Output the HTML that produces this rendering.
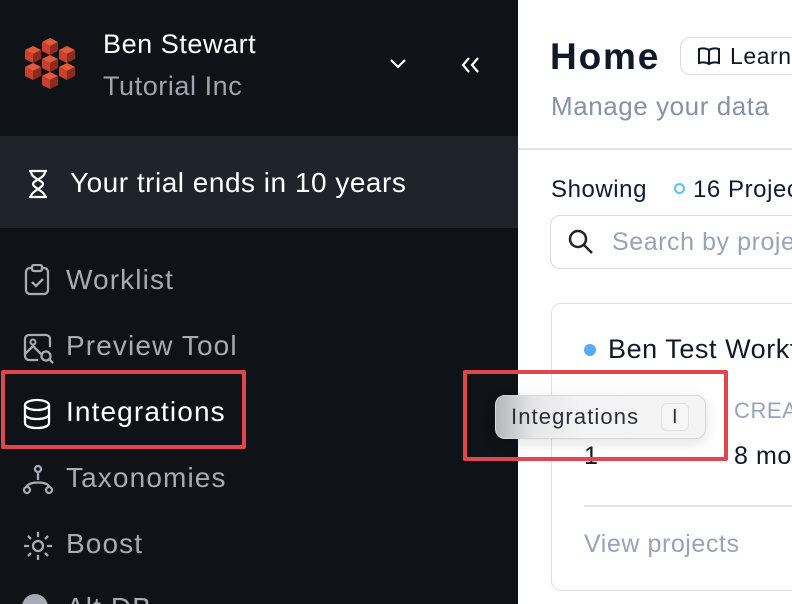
<!DOCTYPE html>
<html><head><style>
*{margin:0;padding:0;box-sizing:border-box}
html,body{width:792px;height:604px;overflow:hidden}
body{position:relative;background:#fff;font-family:"Liberation Sans",sans-serif;letter-spacing:0.035em}
.side{position:absolute;left:0;top:0;width:518px;height:604px;background:#0f1217;overflow:hidden}
.abs{position:absolute;white-space:nowrap}
.nav{position:absolute;left:66px;font-size:28px;color:#a7abb5;letter-spacing:0.04em}
.ic{position:absolute;left:22px}
</style></head><body>
<div class="side">
<svg class="abs" style="left:22px;top:36px" width="56" height="58" viewBox="0 0 56 58">
<defs><g id="c"><polygon points="0,-6 8,-2 0,2 -8,-2" fill="#e25a3a"/><polygon points="-8,-2 0,2 0,11 -8,7" fill="#c9402c"/><polygon points="8,-2 0,2 0,11 8,7" fill="#8e2a1e"/></g></defs>
<use href="#c" x="28" y="8"/><use href="#c" x="11" y="16"/><use href="#c" x="45" y="16"/><use href="#c" x="28" y="25"/><use href="#c" x="11" y="33"/><use href="#c" x="45" y="33"/><use href="#c" x="28" y="42"/>
</svg>
<div class="abs" style="left:103px;top:29px;font-size:27px;color:#fff">Ben Stewart</div>
<div class="abs" style="left:103px;top:71px;font-size:27px;color:#a0a4ae">Tutorial Inc</div>
<svg class="abs" style="left:388px;top:56px" width="20" height="16"><path d="M3 4l7 7 7-7" stroke="#fff" stroke-width="2.2" fill="none"/></svg>
<svg class="abs" style="left:460px;top:56px" width="22" height="18"><path d="M9 2l-6 7 6 7M18 2l-6 7 6 7" stroke="#fff" stroke-width="2.2" fill="none"/></svg>
<div class="abs" style="left:0;top:136px;width:518px;height:92px;background:#1f232b"></div>
<svg class="abs" style="left:26px;top:169px" width="24" height="30" viewBox="0 0 24 30"><path d="M3 2h18M3 28h18M5 2c0 8 12 9 12 13S5 22 5 28M19 2c0 8-12 9-12 13s12 7 12 13" stroke="#fff" stroke-width="2.2" fill="none"/></svg>
<div class="abs" style="left:70px;top:167px;font-size:28px;color:#fff;letter-spacing:0.018em">Your trial ends in 10 years</div>

<svg class="ic" style="top:264px" width="30" height="32" viewBox="0 0 30 32"><rect x="4" y="4" width="22" height="26" rx="4" stroke="#a7abb5" stroke-width="2.3" fill="none"/><rect x="10" y="1" width="10" height="6" rx="2" stroke="#a7abb5" stroke-width="2.3" fill="#0f1217"/><path d="M10 18l4 4 7-7" stroke="#a7abb5" stroke-width="2.3" fill="none"/></svg>
<div class="nav" style="top:264px">Worklist</div>
<svg class="ic" style="top:332px" width="32" height="32" viewBox="0 0 32 32"><path d="M16 28H7a4 4 0 0 1-4-4V7a4 4 0 0 1 4-4h17a4 4 0 0 1 4 4v8M3 22l8-8 8 8" stroke="#a7abb5" stroke-width="2.3" fill="none"/><circle cx="11" cy="10" r="2.5" stroke="#a7abb5" stroke-width="2" fill="none"/><circle cx="24" cy="24" r="4.5" stroke="#a7abb5" stroke-width="2.3" fill="none"/><path d="M27 27l4 4" stroke="#a7abb5" stroke-width="2.3"/></svg>
<div class="nav" style="top:330px">Preview Tool</div>
<svg class="ic" style="top:398px" width="30" height="32" viewBox="0 0 30 32"><ellipse cx="15" cy="7" rx="12" ry="5" stroke="#fff" stroke-width="2.3" fill="none"/><path d="M3 7v18c0 3 5 5 12 5s12-2 12-5V7M3 16c0 3 5 5 12 5s12-2 12-5" stroke="#fff" stroke-width="2.3" fill="none"/></svg>
<div class="nav" style="top:396px;color:#fff">Integrations</div>
<svg class="ic" style="top:464px" width="32" height="32" viewBox="0 0 32 32"><circle cx="16" cy="5" r="3" stroke="#a7abb5" stroke-width="2.3" fill="none"/><circle cx="5" cy="26" r="3" stroke="#a7abb5" stroke-width="2.3" fill="none"/><circle cx="27" cy="26" r="3" stroke="#a7abb5" stroke-width="2.3" fill="none"/><path d="M16 8v8M5 23c0-6 22-6 22 0" stroke="#a7abb5" stroke-width="2.3" fill="none"/></svg>
<div class="nav" style="top:462px">Taxonomies</div>
<svg class="ic" style="top:530px" width="32" height="32" viewBox="0 0 32 32"><circle cx="16" cy="16" r="5" stroke="#a7abb5" stroke-width="2.3" fill="none"/><path d="M16 2v5M16 25v5M2 16h5M25 16h5M6 6l3 3M23 23l3 3M6 26l3-3M23 9l3-3" stroke="#a7abb5" stroke-width="2.3"/></svg>
<div class="nav" style="top:528px">Boost</div>
<div class="abs" style="left:22px;top:594px;width:26px;height:26px;border-radius:50%;background:#a7abb5"></div>
<div class="nav" style="top:592px">Alt DB</div>
</div>

<div class="abs" style="left:550px;top:36px;font-size:37px;font-weight:bold;color:#111827;letter-spacing:0.05em">Home</div>
<div class="abs" style="left:680px;top:37px;width:130px;height:38px;border:1.5px solid #d9dce1;border-radius:10px"></div>
<svg class="abs" style="left:697px;top:46px" width="24" height="20" viewBox="0 0 24 20"><path d="M12 4c-3-2-6-2-10-1v14c4-1 7-1 10 1 3-2 6-2 10-1V3c-4-1-7-1-10 1zM12 4v14" stroke="#111827" stroke-width="2" fill="none"/></svg>
<div class="abs" style="left:730px;top:43px;font-size:23px;color:#111827">Learn</div>
<div class="abs" style="left:551px;top:91px;font-size:26px;color:#8792a6">Manage your data</div>
<div class="abs" style="left:518px;top:148px;width:274px;height:2px;background:#e2e4e8"></div>
<div class="abs" style="left:551px;top:176px;font-size:24px;color:#0f1b33">Showing</div>
<div class="abs" style="left:674px;top:183px;width:11px;height:11px;border:2px solid #5ac4e6;border-radius:50%"></div>
<div class="abs" style="left:693px;top:176px;font-size:24px;color:#0f1b33">16 Projects</div>
<div class="abs" style="left:550px;top:215px;width:260px;height:54px;border:1.5px solid #d9dce1;border-radius:10px"></div>
<svg class="abs" style="left:567px;top:228px" width="28" height="28" viewBox="0 0 28 28"><circle cx="11" cy="11" r="8" stroke="#222" stroke-width="2.5" fill="none"/><path d="M17 17l8 8" stroke="#222" stroke-width="2.5"/></svg>
<div class="abs" style="left:612px;top:228px;font-size:25px;color:#9aa3b5">Search by project</div>

<div class="abs" style="left:551px;top:303px;width:260px;height:288px;border:1.5px solid #dde0e5;border-radius:10px"></div>
<div class="abs" style="left:584px;top:344px;width:12px;height:12px;border-radius:50%;background:#5ea8f5"></div>
<div class="abs" style="left:608px;top:334px;font-size:27px;color:#111827">Ben Test Workflow</div>
<div class="abs" style="left:734px;top:398px;font-size:22px;color:#9aa3b5">CREATED</div>
<div class="abs" style="left:584px;top:442px;font-size:25px;color:#111827">1</div>
<div class="abs" style="left:734px;top:442px;font-size:25px;color:#111827">8 months</div>
<div class="abs" style="left:584px;top:505px;width:220px;height:1.5px;background:#e2e4e8"></div>
<div class="abs" style="left:584px;top:530px;font-size:25px;color:#9aa3b5">View projects</div>

<div class="abs" style="left:1px;top:370px;width:245px;height:79px;border:4px solid #e0474c;border-radius:2px"></div>
<div class="abs" style="left:463px;top:370px;width:265px;height:91px;border:4px solid #e0474c;border-radius:2px"></div>
<div class="abs" style="left:495px;top:395px;width:211px;height:44px;border:1px solid #d5d7db;border-radius:10px;background:linear-gradient(90deg,#b5b6b8 0%,#e6e6e7 18%,#f3f3f4 40%,#f4f4f5 100%);box-shadow:0 4px 14px rgba(0,0,0,.12)"></div>
<div class="abs" style="left:511px;top:404px;font-size:22px;color:#2a2f3a;letter-spacing:0.05em">Integrations</div>
<div class="abs" style="left:661px;top:403px;width:28px;height:28px;border:1px solid #e2e3e6;border-radius:6px;background:#f6f6f7;text-align:center;font-size:20px;line-height:26px;color:#2a2f3a">I</div>
</body></html>
